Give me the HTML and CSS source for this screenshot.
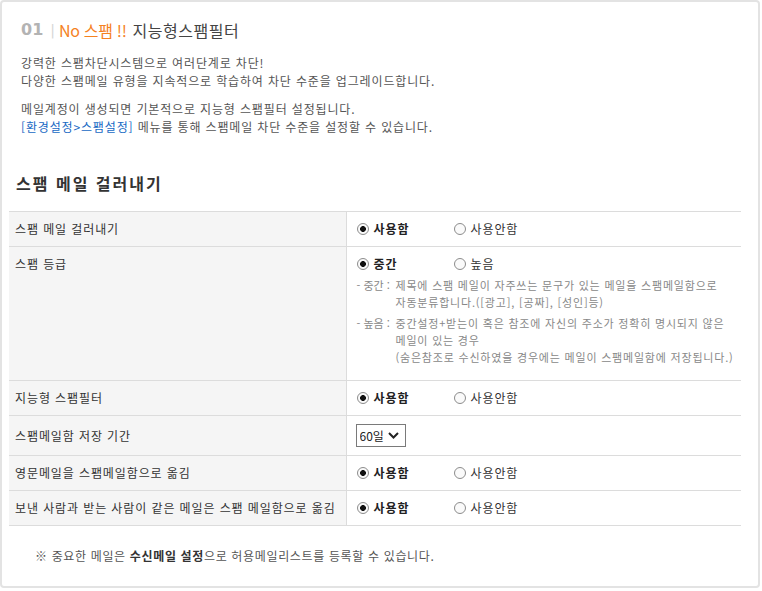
FILE: index.html
```html
<!DOCTYPE html>
<html lang="ko">
<head>
<meta charset="utf-8">
<title>지능형스팸필터</title>
<link rel="stylesheet" href="styles.css">
</head>
<body>
<div class="frame">
  <h1 class="title"><span class="num">01</span><span class="bar">|</span><span class="no">No 스팸 !!</span><span class="name">지능형스팸필터</span></h1>
  <div class="intro">
    <p>강력한 스팸차단시스템으로 여러단계로 차단!<br>다양한 스팸메일 유형을 지속적으로 학습하여 차단 수준을 업그레이드합니다.</p>
    <p>메일계정이 생성되면 기본적으로 지능형 스팸필터 설정됩니다.<br><span class="link">[환경설정&gt;스팸설정]</span> 메뉴를 통해 스팸메일 차단 수준을 설정할 수 있습니다.</p>
  </div>
  <h2 class="section">스팸 메일 걸러내기</h2>
  <table class="settings">
    <tr>
      <th>스팸 메일 걸러내기</th>
      <td>
        <label class="opt first"><input type="radio" name="r1" checked><b>사용함</b></label><label class="opt"><input type="radio" name="r1">사용안함</label>
      </td>
    </tr>
    <tr class="tall">
      <th>스팸 등급</th>
      <td>
        <label class="opt first"><input type="radio" name="r2" checked><b>중간</b></label><label class="opt"><input type="radio" name="r2">높음</label>
        <ul class="desc">
          <li><span class="tag">- 중간 :</span><span>제목에 스팸 메일이 자주쓰는 문구가 있는 메일을 스팸메일함으로<br>자동분류합니다.([광고], [공짜], [성인]등)</span></li>
          <li><span class="tag">- 높음 :</span><span>중간설정+받는이 혹은 참조에 자신의 주소가 정확히 명시되지 않은<br>메일이 있는 경우<br>(숨은참조로 수신하였을 경우에는 메일이 스팸메일함에 저장됩니다.)</span></li>
        </ul>
      </td>
    </tr>
    <tr>
      <th>지능형 스팸필터</th>
      <td>
        <label class="opt first"><input type="radio" name="r3" checked><b>사용함</b></label><label class="opt"><input type="radio" name="r3">사용안함</label>
      </td>
    </tr>
    <tr>
      <th>스팸메일함 저장 기간</th>
      <td>
        <span class="select"><select><option>60일</option><option>30일</option><option>90일</option></select><svg class="chev" width="11" height="7" viewBox="0 0 11 7"><path d="M1 1 L5.5 5.5 L10 1" fill="none" stroke="#222" stroke-width="2"/></svg></span>
      </td>
    </tr>
    <tr>
      <th>영문메일을 스팸메일함으로 옮김</th>
      <td>
        <label class="opt first"><input type="radio" name="r4" checked><b>사용함</b></label><label class="opt"><input type="radio" name="r4">사용안함</label>
      </td>
    </tr>
    <tr>
      <th>보낸 사람과 받는 사람이 같은 메일은 스팸 메일함으로 옮김</th>
      <td>
        <label class="opt first"><input type="radio" name="r5" checked><b>사용함</b></label><label class="opt"><input type="radio" name="r5">사용안함</label>
      </td>
    </tr>
  </table>
  <p class="note">※ 중요한 메일은 <b>수신메일 설정</b>으로 허용메일리스트를 등록할 수 있습니다.</p>
</div>
</body>
</html>
```
FILE: styles.css
```css
html, body {
  margin: 0;
  padding: 0;
  background: #fff;
}
body {
  font-family: "Noto Sans CJK KR", "Noto Sans", sans-serif;
  font-size: 12px;
  color: #555;
}
.frame {
  box-sizing: border-box;
  width: 760px;
  height: 588px;
  border: 2px solid #e3e3e3;
  border-radius: 4px;
  padding: 18px 0 0 7px;
}
.title {
  margin: 0 0 0 12px;
  height: 20px;
  line-height: 20px;
  font-weight: normal;
  font-size: 16px;
  display: flex;
  align-items: center;
  white-space: nowrap;
}
.title .num {
  font-family: "DejaVu Sans", sans-serif;
  font-weight: bold;
  font-size: 16px;
  color: #b3b3b3;
}
.title .bar {
  font-family: "DejaVu Sans", sans-serif;
  color: #d6d6d6;
  font-size: 14px;
  margin: 0 4px 0 7px;
}
.title .no {
  color: #f5821f;
  letter-spacing: -0.3px;
  margin-right: 6px;
}
.title .name {
  color: #444;
  letter-spacing: 0.5px;
}
.intro {
  margin: 14px 0 0 12px;
  letter-spacing: 0.85px;
}
.intro p {
  margin: 0 0 10px 0;
  line-height: 18px;
}
.link {
  color: #1769c4;
}
.section {
  margin: 37px 0 18px 7px;
  font-size: 16px;
  line-height: 20px;
  font-weight: bold;
  color: #333;
  letter-spacing: 2px;
}
.settings {
  width: 732px;
  border-collapse: collapse;
  border-top: 1px solid #dcdcdc;
}
.settings tr {
  border-bottom: 1px solid #dcdcdc;
}
.settings th, .settings td {
  padding: 8px 6px;
  line-height: 18px;
  font-size: 12px;
  text-align: left;
  vertical-align: middle;
  letter-spacing: 0.9px;
}
.settings th {
  box-sizing: border-box;
  width: 337px;
  background: #f5f5f5;
  border-right: 1px solid #dcdcdc;
  font-weight: normal;
  color: #333;
}
.settings td {
  padding-left: 10px;
  color: #333;
}
.settings tr.tall th, .settings tr.tall td {
  vertical-align: top;
}
.opt {
  display: inline-flex;
  align-items: center;
  height: 18px;
  vertical-align: top;
}
.opt.first {
  width: 97px;
}
.opt b {
  color: #222;
}
.opt input {
  appearance: none;
  -webkit-appearance: none;
  box-sizing: border-box;
  width: 12px;
  height: 12px;
  margin: 0 5px 0 0;
  border: 1px solid #8c8c8c;
  border-radius: 50%;
  background: #fafafa;
}
.opt input:checked {
  background: radial-gradient(circle, #111 0, #111 2.6px, #fafafa 3.2px);
}
.desc {
  list-style: none;
  margin: 4px 0 6px 0;
  padding: 0;
  font-size: 11px;
  line-height: 17px;
  color: #888;
  letter-spacing: 0.8px;
}
.desc li {
  display: flex;
}
.desc li + li {
  margin-top: 4px;
}
.desc .tag {
  flex: 0 0 39px;
  white-space: nowrap;
  letter-spacing: 0;
}
.select {
  position: relative;
  display: inline-block;
  vertical-align: middle;
}
.select select {
  appearance: none;
  -webkit-appearance: none;
  box-sizing: border-box;
  width: 50px;
  height: 23px;
  margin: 0 0 0 -1px;
  padding: 0 0 0 3px;
  border: 1px solid #7a7a7a;
  border-radius: 0;
  background: #fff;
  font-family: "Noto Sans CJK KR", "Noto Sans", sans-serif;
  font-size: 12px;
  letter-spacing: 0;
  color: #222;
}
.select .chev {
  position: absolute;
  right: 7px;
  top: 8px;
  pointer-events: none;
}
.note {
  margin: 21px 0 0 26px;
  line-height: 18px;
  color: #555;
  letter-spacing: 0.65px;
}
.note b {
  color: #333;
}
```
